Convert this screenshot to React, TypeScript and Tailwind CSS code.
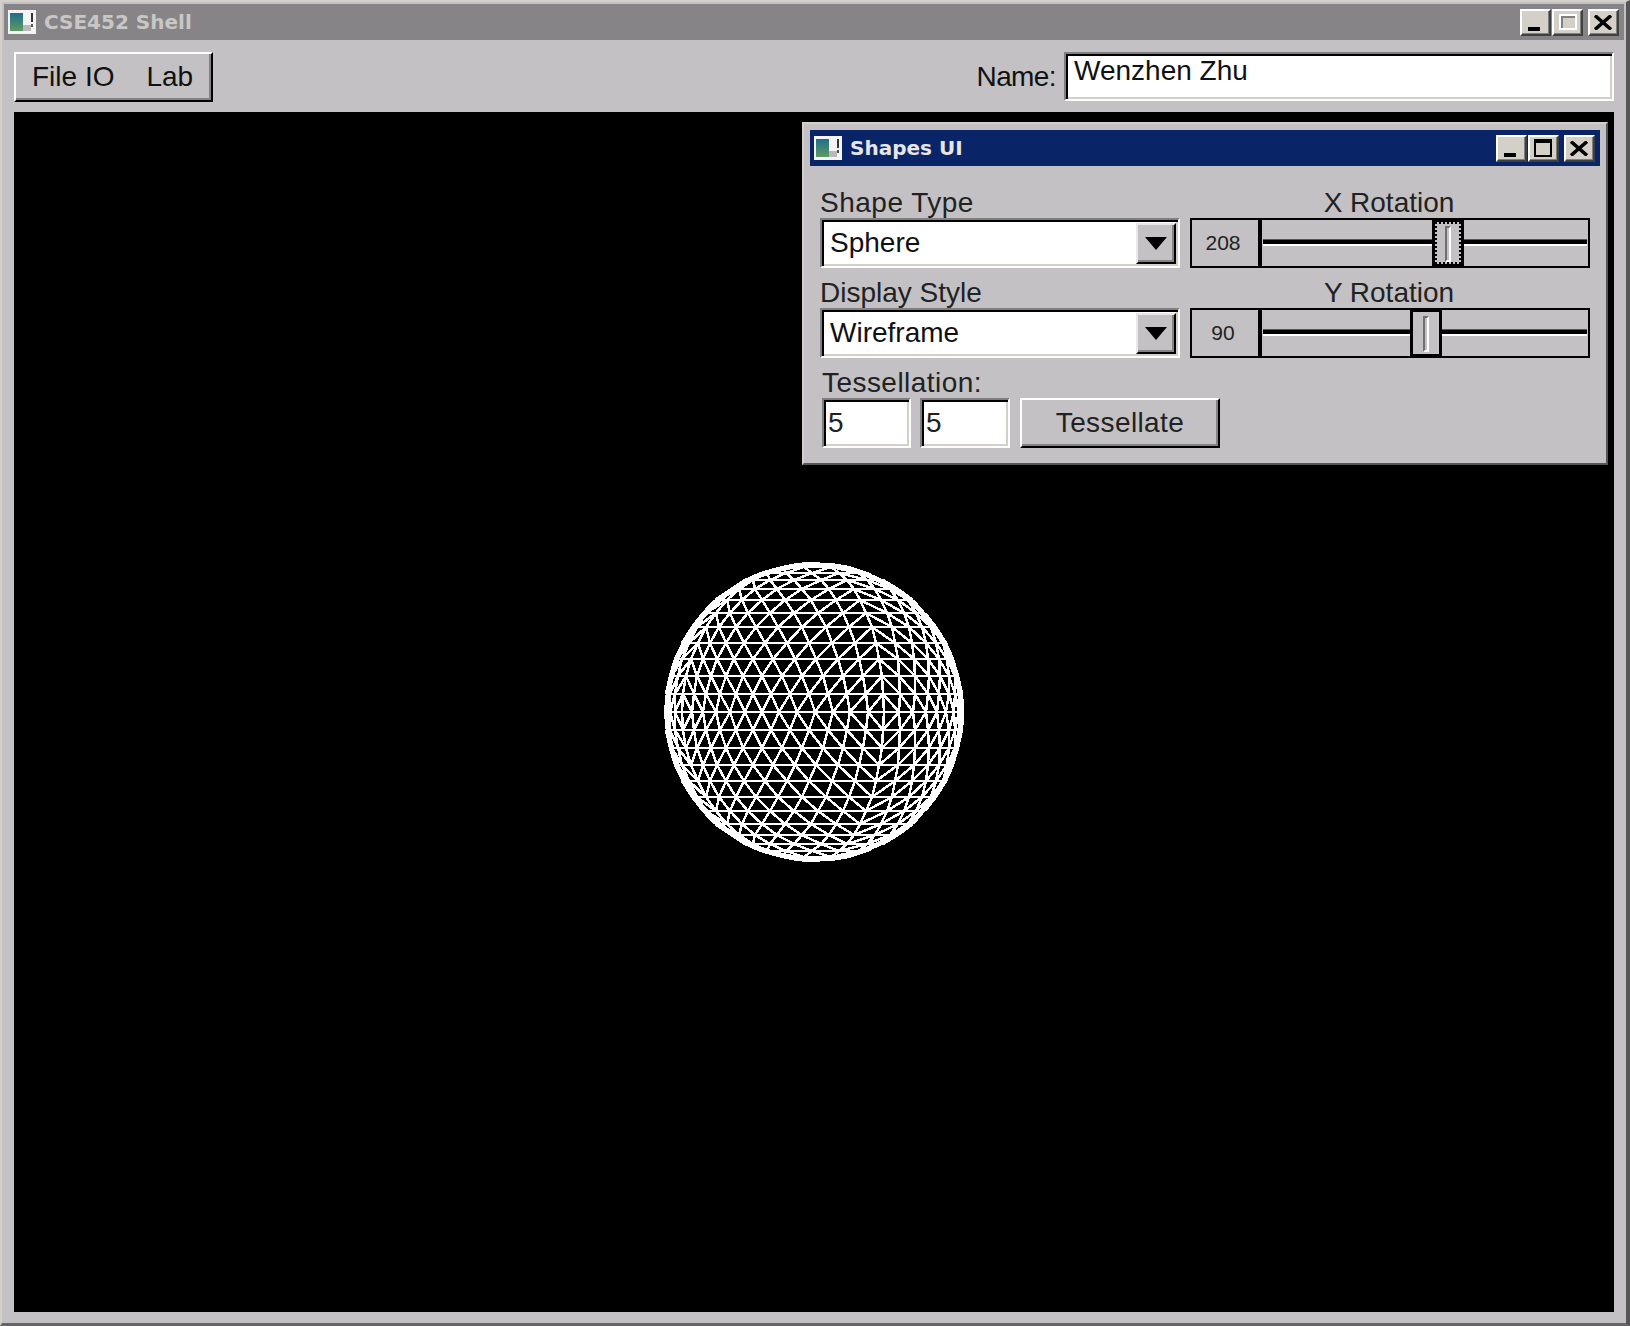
const FONT = "font-['Liberation_Sans',Arial,sans-serif]"

const raised = 'border-2 border-t-white border-l-white border-r-black border-b-black shadow-[inset_-2px_-2px_0_#848284]'
const sunken =
  'border-2 border-t-[#807e81] border-l-[#807e81] border-r-white border-b-white shadow-[inset_2px_2px_0_#000,inset_-2px_-2px_0_#d4d0c8]'

// octant mesh: n rings per hemisphere, each ring has one segment fewer per quadrant
function spherePath(n: number, radius: number, rotY: number) {
  let d = ''
  const point = (lat: number, lon: number) => [
    Math.cos(lat) * Math.sin(lon + rotY),
    Math.sin(lat),
    Math.cos(lat) * Math.cos(lon + rotY),
  ]
  const seg = (p: number[], q: number[]) => {
    if (p[2] + q[2] < 0) return
    d += `M${Math.round(radius + p[0] * radius)} ${Math.round(radius - p[1] * radius)}L${Math.round(radius + q[0] * radius)} ${Math.round(radius - q[1] * radius)}`
  }
  const at = (side: number, quad: number, j: number, i: number) => {
    const lon = j === n ? 0 : (quad + i / (n - j)) * (Math.PI / 2)
    return point((side * j * Math.PI) / 2 / n, lon)
  }
  for (const side of [1, -1]) {
    for (let quad = 0; quad < 4; quad++) {
      for (let j = 0; j < n; j++) {
        for (let i = 0; i < n - j; i++) {
          seg(at(side, quad, j, i), at(side, quad, j, i + 1))
          seg(at(side, quad, j, i), at(side, quad, j + 1, i))
          seg(at(side, quad, j, i + 1), at(side, quad, j + 1, i))
        }
      }
    }
  }
  return d
}

function AppIcon() {
  return (
    <svg width="28" height="24" viewBox="0 0 28 24" className="shrink-0">
      <rect width="28" height="24" fill="#f4f4f4" />
      <defs>
        <linearGradient id="ico" x1="0" y1="0" x2="0" y2="1">
          <stop offset="0" stopColor="#1d6f8c" />
          <stop offset="1" stopColor="#5f9a63" />
        </linearGradient>
      </defs>
      <rect x="2" y="3" width="13" height="18" fill="url(#ico)" />
      <rect x="15" y="15" width="8" height="6" fill="#b9b9b9" />
      <rect x="23" y="3" width="2" height="9" fill="#333" />
      <rect x="23" y="14" width="2" height="3" fill="#555" />
    </svg>
  )
}

function CaptionButton({ children, className = '' }: { children: React.ReactNode; className?: string }) {
  return (
    <div
      className={`relative h-[27px] w-[31px] bg-[#d4d0c8] border-t-2 border-l-2 border-t-white border-l-white border-r-2 border-b-2 border-r-[#404040] border-b-[#404040] shadow-[inset_-1px_-1px_0_#808080] ${className}`}
    >
      {children}
    </div>
  )
}

function MinIcon() {
  return <div className="absolute left-[6px] bottom-[3px] h-[4px] w-[12px] bg-black" />
}

function CloseIcon() {
  return (
    <svg width="18" height="15" viewBox="0 0 18 15" className="absolute left-[4px] top-[4px]">
      <path d="M1 0.5 L17 14.5 M17 0.5 L1 14.5" stroke="#000" strokeWidth="3.4" fill="none" />
    </svg>
  )
}

function Combo({ value }: { value: string }) {
  return (
    <div className={`relative flex h-[50px] w-[360px] items-center bg-white pl-[8px] ${sunken}`}>
      <span className="text-[28px] text-[#111] leading-none">{value}</span>
      <div className="absolute right-[2px] top-[3px] flex h-[41px] w-[40px] items-center justify-center bg-[#c3c1c4] border-2 border-t-[#e8e8e8] border-l-[#e8e8e8] border-r-black border-b-black shadow-[inset_-2px_-2px_0_#848284]">
        <div className="h-0 w-0 border-x-[11px] border-t-[13px] border-x-transparent border-t-black" />
      </div>
    </div>
  )
}

function Slider({ value, thumbLeft, focused }: { value: number; thumbLeft: string; focused?: boolean }) {
  return (
    <div className="relative flex h-[50px] w-[400px] border-2 border-black">
      <div className="flex w-[70px] items-center justify-center border-r-4 border-black pr-[4px] text-[21px] text-[#222]">
        {value}
      </div>
      <div className="relative flex-1">
        <div className="mt-[19px] ml-px mr-px h-[7px] border-t-[1px] border-b-[2px] border-t-[#555] border-b-white bg-black" />
        <div className={`absolute top-0 h-[46px] w-[32px] bg-[#c3c1c4] border-x-[3px] border-y-2 border-black ${thumbLeft}`}>
          {focused && <div className="absolute inset-0 border-2 border-dotted border-black" />}
          <div className="absolute left-[10px] top-[4px] h-[36px] w-[6px] border-l-2 border-t-2 border-l-[#6f6f6f] border-t-[#6f6f6f] border-r-2 border-r-white border-b-2 border-b-white" />
        </div>
      </div>
    </div>
  )
}

function ShapesUI() {
  return (
    <div className="absolute left-[788px] top-[10px] h-[343px] w-[806px] border-2 border-t-[#d4d0c8] border-l-[#d4d0c8] border-r-[#555] border-b-[#555] bg-[#c3c1c4] p-[6px] pb-0">
      <div className="flex h-[36px] items-center bg-[#0a2468] pl-[4px] pr-[5px]">
        <AppIcon />
        <span className="ml-[8px] flex-1 font-['DejaVu_Sans',sans-serif] text-[20px] font-bold text-[#e6e6e6]">Shapes UI</span>
        <CaptionButton>
          <MinIcon />
        </CaptionButton>
        <CaptionButton className="ml-px">
          <div className="absolute left-[4px] top-[2px] h-[18px] w-[18px] border-2 border-t-4 border-black" />
        </CaptionButton>
        <CaptionButton className="ml-[5px]">
          <CloseIcon />
        </CaptionButton>
      </div>
      <div className="flex gap-[10px] pl-[10px] pt-[22px]">
        <div className="flex flex-col">
          <div className="h-[30px] text-[28px] leading-[30px] tracking-[0.5px] text-[#222]">Shape Type</div>
          <Combo value="Sphere" />
          <div className="mt-[10px] h-[30px] text-[28px] leading-[30px] text-[#222]">Display Style</div>
          <Combo value="Wireframe" />
        </div>
        <div className="flex flex-col">
          <div className="h-[30px] pr-[2px] text-center text-[28px] leading-[30px] text-[#222]">X Rotation</div>
          <Slider value={208} thumbLeft="left-[170px]" focused />
          <div className="mt-[10px] h-[30px] pr-[2px] text-center text-[28px] leading-[30px] text-[#222]">Y Rotation</div>
          <Slider value={90} thumbLeft="left-[148px]" />
        </div>
      </div>
      <div className="pl-[12px] pt-[10px]">
        <div className="h-[30px] text-[28px] leading-[30px] tracking-[0.45px] text-[#222]">Tessellation:</div>
        <div className="flex">
          <div className={`flex h-[50px] w-[89px] items-center bg-white pl-[4px] text-[28px] text-[#222] ${sunken}`}>5</div>
          <div className={`ml-[9px] flex h-[50px] w-[90px] items-center bg-white pl-[4px] text-[28px] text-[#222] ${sunken}`}>5</div>
          <div className={`ml-[10px] flex h-[50px] w-[200px] items-center justify-center text-[28px] tracking-[0.4px] text-[#222] ${raised}`}>Tessellate</div>
        </div>
      </div>
    </div>
  )
}

export default function App() {
  const d = spherePath(13, 149, (28 * Math.PI) / 180)
  return (
    <div className={`h-[1326px] w-[1630px] overflow-hidden border-t-2 border-l-2 border-r-4 border-b-[3px] border-t-[#d4d0c8] border-l-[#d4d0c8] border-r-[#555] border-b-[#666] bg-[#c3c1c4] p-[2px] pb-0 ${FONT}`}>
      <div className="flex h-[36px] items-center bg-[#868487] pl-[4px] pr-[5px]">
        <AppIcon />
        <span className="ml-[8px] flex-1 font-['DejaVu_Sans',sans-serif] text-[20px] font-bold text-[#c9c7c4]">CSE452 Shell</span>
        <CaptionButton>
          <MinIcon />
        </CaptionButton>
        <CaptionButton className="ml-px">
          <div className="absolute left-[5px] top-[3px] h-[16px] w-[18px] border-2 border-white bg-[#d4d0c8] shadow-[inset_2px_2px_0_#808080]" />
        </CaptionButton>
        <CaptionButton className="ml-[5px]">
          <CloseIcon />
        </CaptionButton>
      </div>
      <div className="flex h-[72px] items-start pl-[10px] pr-[10px] pt-[12px]">
        <div className={`flex h-[50px] w-[199px] items-center gap-[32px] pl-[16px] text-[28px] text-[#111] ${raised}`}>
          <span>File IO</span>
          <span>Lab</span>
        </div>
        <div className="ml-auto mt-[5px] text-[28px] leading-[40px] tracking-[-0.6px] text-[#111]">Name:</div>
        <div className={`ml-[8px] h-[49px] w-[550px] bg-white pl-[8px] pt-[2px] text-[28px] leading-[30px] text-[#111] ${sunken}`}>
          Wenzhen Zhu
        </div>
      </div>
      <div className="relative mx-[10px] flex h-[1200px] w-[1600px] items-center justify-center bg-black">
        <svg width="302" height="302" viewBox="-2 -2 302 302" shapeRendering="crispEdges">
          <path d={d} stroke="#fff" strokeWidth="2.5" fill="none" />
          <circle cx="149" cy="149" r="147" stroke="#fff" strokeWidth="5" fill="none" />
        </svg>
        <ShapesUI />
      </div>
    </div>
  )
}
